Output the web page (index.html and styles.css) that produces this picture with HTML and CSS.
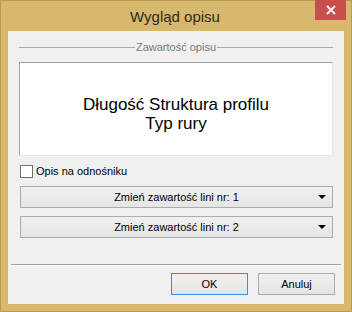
FILE: index.html
```html
<!DOCTYPE html>
<html lang="pl">
<head>
<meta charset="utf-8">
<link rel="stylesheet" href="styles.css">
</head>
<body>
<div class="window">
  <div class="titlebar">
    <span class="title">Wygląd opisu</span>
    <div class="close"><svg width="10" height="10" viewBox="0 0 10 10"><path d="M1 1L9 9M9 1L1 9" stroke="#fff" stroke-width="1.8"/></svg></div>
  </div>
  <div class="client">
    <div class="group-head"><span class="gline"></span><span class="gtext">Zawartość opisu</span><span class="gline"></span></div>
    <div class="preview">
      <div>Długość Struktura profilu</div>
      <div>Typ rury</div>
    </div>
    <label class="check"><span class="box"></span><span>Opis na odnośniku</span></label>
    <div class="drop"><span>Zmień zawartość lini nr: 1</span><svg class="arrow" width="8" height="4" viewBox="0 0 8 4"><path d="M0 0H8L4 4Z" fill="#000"/></svg></div>
    <div class="drop"><span>Zmień zawartość lini nr: 2</span><svg class="arrow" width="8" height="4" viewBox="0 0 8 4"><path d="M0 0H8L4 4Z" fill="#000"/></svg></div>
    <div class="spacer"></div>
    <div class="sep"></div>
    <div class="buttons">
      <div class="btn default">OK</div>
      <div class="btn">Anuluj</div>
    </div>
  </div>
</div>
</body>
</html>
```

FILE: styles.css
```css
html, body { margin: 0; padding: 0; }
body { width: 352px; height: 312px; overflow: hidden; font-family: "Liberation Sans", Arial, sans-serif; }
.window {
  box-sizing: border-box;
  width: 352px; height: 312px;
  background: #d8b86e;
  border: 1px solid #b8994f;
  display: flex; flex-direction: column;
  padding: 0 7px 7px 7px;
}
.titlebar {
  position: relative;
  height: 30px;
  display: flex; align-items: center; justify-content: center;
}
.title { font-size: 15px; color: #2e2a20; margin-top: 1px; margin-left: -2px; }
.close {
  position: absolute; top: -1px; right: -2px;
  width: 31px; height: 20px;
  background: #c7504c;
  display: flex; align-items: center; justify-content: center;
}
.client {
  flex: 1;
  background: #f0f0f0;
  display: flex; flex-direction: column;
  font-size: 11px; color: #000;
}
.group-head {
  display: flex; align-items: center;
  margin: 9px 11px 0 11px;
  height: 14px;
}
.gline { flex: 1; height: 1px; background: #a8a8a8; }
.gtext { color: #7a7a7a; padding: 0 1px; font-size: 11px; }
.preview {
  margin: 8px 11px 0 11px;
  height: 94px;
  box-sizing: border-box;
  background: #fff;
  border: 1px solid; border-color: #a0a0a0 #e6e6e6 #e6e6e6 #a0a0a0;
  display: flex; flex-direction: column; align-items: center; justify-content: center;
  padding-top: 10px;
  font-size: 17px; line-height: 19px;
}
.check {
  display: flex; align-items: center;
  margin: 8px 0 0 12px;
  height: 14px;
}
.box {
  width: 11px; height: 11px;
  border: 1px solid #707070; background: #fff;
  margin-right: 3px;
}
.drop {
  position: relative;
  margin: 8px 11px 0 12px;
  height: 22px;
  box-sizing: border-box;
  border: 1px solid #acacac;
  background: linear-gradient(#f0f0f0, #e5e5e5);
  display: flex; align-items: center; justify-content: center;
}
.arrow { position: absolute; right: 6px; top: 8px; }
.spacer { flex: 1; }
.sep { margin: 0 3px; height: 1px; background: #a0a0a0; border-bottom: 1px solid #fff; }
.buttons {
  display: flex; justify-content: flex-end; gap: 10px;
  margin: 7px 9px 9px 0;
}
.btn {
  width: 77px; height: 22px;
  box-sizing: border-box;
  border: 1px solid #acacac;
  background: linear-gradient(#f0f0f0, #e5e5e5);
  display: flex; align-items: center; justify-content: center;
}
.btn.default { border-color: #3c8ee0; }
```
